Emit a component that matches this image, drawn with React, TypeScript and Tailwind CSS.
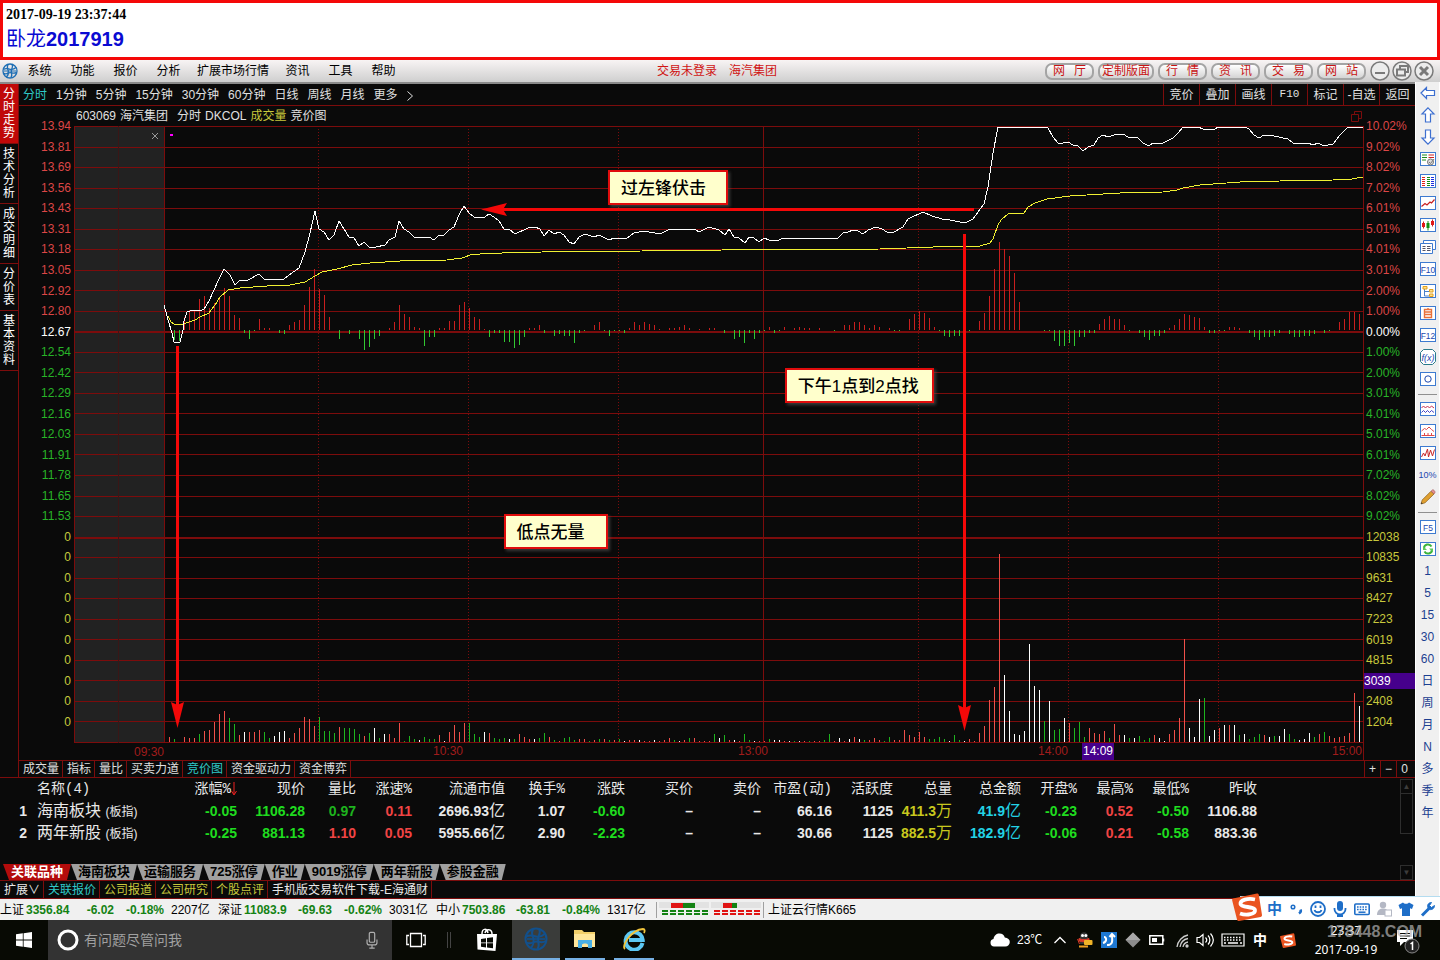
import React from 'react';
import clsx from 'clsx';

/* ---------- data ---------- */

const MENUS = ['系统', '功能', '报价', '分析', '扩展市场行情', '资讯', '工具', '帮助'];
const QUICK_LINKS = ['网厅', '定制版面', '行情', '资讯', '交易', '网站'];
const SIDE_TABS = ['分时走势', '技术分析', '成交明细', '分价表', '基本资料'];
const PERIODS = ['分时', '1分钟', '5分钟', '15分钟', '30分钟', '60分钟', '日线', '周线', '月线', '更多'];
const TOOLS = ['竞价', '叠加', '画线', 'F10', '标记', '-自选', '返回'];
const INDICATORS = ['成交量', '指标', '量比', '买卖力道', '竞价图', '资金驱动力', '资金博弈'];

const PRICES = [
    '13.94', '13.81', '13.69', '13.56', '13.43', '13.31', '13.18', '13.05', '12.92', '12.80',
    '12.67', '12.54', '12.42', '12.29', '12.16', '12.03', '11.91', '11.78', '11.65', '11.53',
];
const PERCENTS = [
    '10.02%', '9.02%', '8.02%', '7.02%', '6.01%', '5.01%', '4.01%', '3.01%', '2.00%', '1.00%',
    '0.00%', '1.00%', '2.00%', '3.01%', '4.01%', '5.01%', '6.01%', '7.02%', '8.02%', '9.02%',
];
const VOLUMES = ['12038', '10835', '9631', '8427', '7223', '6019', '4815', '3039', '2408', '1204'];

// one token per minute: colour + bar height
const VOLUME_BARS =
    'r5 g3 - r5 r4 r4 g8 r11 r12 r20 r28 r31 g24 g18 r7 w10 r10 r10 r12 g10 g4 w6 w10 w11 r4 r9 r14 r25 r23 r16 ' +
    'g25 g11 g11 g9 r15 g14 g14 g13 g8 r6 g9 w14 g4 w8 r8 r4 r19 g1 g6 g3 w2 g5 g3 g3 r7 w1 r10 r17 r10 r19 ' +
    'g19 g8 g5 w10 r9 g4 g3 g4 w3 g3 r8 r5 r3 w3 g4 g9 r5 g2 r1 g4 g5 g2 r3 r3 g1 r2 g3 r3 g2 r2 ' +
    'g3 w1 r2 r2 w2 r1 r1 w2 r1 r2 r4 g2 w1 r2 g4 r4 r1 r1 r1 g8 w4 g7 r2 w2 r1 g8 g2 w1 r1 r1 ' +
    'g3 w2 w2 r1 w1 g1 w1 r1 g1 r1 r1 g2 g8 r1 w4 r1 w3 r5 w3 g2 r2 r4 r2 g1 g5 r2 r2 r12 r7 r5 ' +
    'r10 r5 g3 g3 g5 g3 w1 g7 g2 w1 r3 r1 r9 r16 r42 r55 r188 w67 w31 w8 w7 w11 w98 w56 w52 g21 w41 g12 g13 w24 ' +
    'r19 g14 g20 g5 r14 r9 r8 r11 g4 r18 r7 w7 g4 w4 g6 g2 g4 r7 w4 w1 r8 r12 r24 r103 w14 w5 w43 g44 w6 w12 ' +
    'r14 w17 r17 w17 g7 w8 g3 g5 g8 r7 w5 g6 w6 w13 g8 g3 w2 w3 w9 g5 r8 g10 r6 r4 r5 r6 r9 r49 w36 g13';

// deviation from the zero line, starting at the second minute
const DELTAS = [
    -10, -11, 13, 20, 20, 31, 34, 22, 27, 32, 42, 34, 15, 12, -3, -9, -1, 11, 2, 2, 0, -3, -4, 5, 8, 10, 25, 43, 61, 41,
    35, 13, 0, -9, 0, -4, 0, -9, -20, -17, -9, -6, 0, 2, 8, 25, 16, 13, 3, 2, -16, -7, -7, 2, 2, 9, 9, 25, 28, 22,
    13, 11, 1, -7, -3, -3, -12, -12, -18, -15, -7, 2, 2, 5, -3, 0, -6, -4, -6, -6, -13, -3, -1, 0, 5, 8, -1, -6, -1, -1,
    -3, 2, 8, 5, 8, 6, 5, 1, 0, 2, 2, 3, 5, 2, 0, 1, 0, 2, 2, 0, -3, 0, -9, -7, -13, -3, -9, -3, -1, 3,
    -3, -1, 3, 0, 2, 3, 2, 2, 0, 2, 0, 0, -1, 0, 5, 5, 8, 8, 5, 2, 5, 3, 0, 2, -1, -1, 0, 11, 16, 19,
    17, 12, 3, -1, -6, -7, -6, -6, 0, -1, 0, 9, 17, 34, 61, 88, 81, 74, 57, 28, 0, 0, 0, 0, -1, -1, -11, -16, -16, -13,
    -16, -7, -7, -3, -3, 6, 11, 14, 11, 11, 5, -1, 0, -3, -7, -10, -6, -6, -3, 2, 5, 11, 16, 15, 13, 12, 3, -3, -3, -1,
    -1, 3, 3, 2, 0, -3, -7, -10, -7, -7, -6, -3, 0, -4, -7, -7, -6, -6, -4, 0, -3, -1, 0, 8, 11, 18, 18, 16, 11,
];

const PRICE_LINE =
    '164,305 166,312 168,320 172,333 174,342 180,342 183,330 184,321 187,312 190,311 195,310 200,311 204,309 209,301 218,281 ' +
    '224,269 230,275 235,285 239,281 248,280 259,274 264,279 284,279 289,275 299,268 305,252 310,233 315,211 319,229 324,232 ' +
    '329,240 334,235 339,221 349,237 354,238 359,246 364,242 369,247 376,247 385,245 389,240 395,237 399,221 404,229 409,232 ' +
    '414,237 423,238 429,237 434,240 439,235 444,235 449,230 454,227 459,215 464,206 469,213 474,217 485,217 489,214 494,217 ' +
    '499,221 504,229 509,229 515,234 528,228 535,227 540,229 544,236 549,230 554,234 559,232 564,235 569,242 574,244 579,237 ' +
    '585,234 594,237 599,235 609,240 614,238 627,238 634,233 644,231 660,234 670,229 695,229 699,232 709,227 719,230 725,235 ' +
    '729,229 734,237 739,238 745,243 749,237 754,238 759,242 764,238 769,240 779,240 783,238 838,238 843,233 848,232 853,230 ' +
    '858,231 863,234 868,230 876,227 882,229 887,232 894,232 903,227 908,219 923,212 932,216 942,219 950,220 960,222 967,222 ' +
    '973,219 978,212 984,204 988,187 993,153 998,127 1040,127 1048,128 1053,137 1058,143 1063,143 1068,142 1073,145 1078,146 ' +
    '1083,151 1088,147 1094,145 1098,138 1103,135 1108,137 1117,134 1123,134 1128,137 1138,138 1143,143 1149,146 1153,143 ' +
    '1163,143 1173,138 1178,133 1183,127 1198,127 1203,129 1214,130 1218,127 1245,127 1249,129 1254,135 1259,138 1264,135 ' +
    '1274,136 1288,139 1293,143 1308,143 1313,145 1318,143 1324,146 1333,144 1340,135 1348,127 1363,127';

const AVG_LINE =
    '168,316 171,322 174,324 183,324 195,320 200,317 209,313 215,305 220,297 228,290 240,288 267,286 290,285 305,282 315,276 ' +
    '322,272 337,269 352,265 370,263 400,261 447,260 462,258 473,254 480,254 502,253 542,252 642,251 722,250 880,249 960,246 ' +
    '980,246 990,243 993,239 998,225 1001,220 1008,214 1024,213 1028,207 1035,203 1047,199 1070,196 1120,193 1163,192 ' +
    '1177,190 1183,188 1200,185 1240,182 1280,181 1333,180 1352,179 1363,177';

const BAR_COLORS: Record<string, string> = { r: '#f0504a', g: '#1eb41e', w: '#ffffff' };

type Cell = [string, string?];

const COLUMNS = [
    '涨幅%', '现价', '量比', '涨速%', '流通市值', '换手%', '涨跌', '买价', '卖价',
    '市盈(动)', '活跃度', '总量', '总金额', '开盘%', '最高%', '最低%', '昨收',
];

const G = 'text-[#1fdc1f]';
const R = 'text-[#f04444]';
const Y = 'text-[#c8c81e]';
const C = 'text-[#22d3e6]';

const ROWS: { name: string; cells: Cell[] }[] = [
    {
        name: '海南板块',
        cells: [
            ['-0.05', G], ['1106.28', G], ['0.97', 'text-[#1eb41e]'], ['0.11', R], ['2696.93亿'], ['1.07'], ['-0.60', G], ['–'], ['–'],
            ['66.16'], ['1125'], ['411.3万', Y], ['41.9亿', C], ['-0.23', G], ['0.52', R], ['-0.50', G], ['1106.88'],
        ],
    },
    {
        name: '两年新股',
        cells: [
            ['-0.25', G], ['881.13', G], ['1.10', R], ['0.05', R], ['5955.66亿'], ['2.90'], ['-2.23', G], ['–'], ['–'],
            ['30.66'], ['1125'], ['882.5万', Y], ['182.9亿', C], ['-0.06', G], ['0.21', R], ['-0.58', G], ['883.36'],
        ],
    },
];

const SHEETS = ['关联品种', '海南板块', '运输服务', '725涨停', '作业', '9019涨停', '两年新股', '参股金融'];

const LINKS: [string, string][] = [
    ['扩展∨', 'text-[#e8e8e8]'],
    ['关联报价', 'text-[#2fc8c8]'],
    ['公司报道', 'text-[#c8c83c]'],
    ['公司研究', 'text-[#c8c83c]'],
    ['个股点评', 'text-[#c8c83c]'],
    ['手机版交易软件下载-E海通财', 'text-[#e8e8e8]'],
];

const INDEXES = [
    { name: '上证', value: '3356.84', diff: '-6.02', pct: '-0.18%', amount: '2207亿' },
    { name: '深证', value: '11083.9', diff: '-69.63', pct: '-0.62%', amount: '3031亿' },
    { name: '中小', value: '7503.86', diff: '-63.81', pct: '-0.84%', amount: '1317亿' },
];

/* ---------- small drawings ---------- */

const Logo = ({ className }: { className?: string }) => (
    <svg viewBox="0 0 24 24" className={className} fill="none" stroke="currentColor" strokeWidth="2">
        <circle cx="12" cy="12" r="10.5" />
        <path d="M2 9.500C7 7 9 9 12 9.500s6 0 9.500-3M2.500 15.500c4 2.500 7-1 9.500-1s6 2 10-.5" />
        <path d="M9 2C6.500 7 9 9 9.500 12s0 6-3 9.500M15 1.800c2.500 4-1 7-1 10s2 6.500-.5 10" />
        <path d="M3 12h18" strokeWidth="1.500" />
    </svg>
);

const Frame = ({ children }: { children?: React.ReactNode }) => (
    <svg viewBox="0 0 16 16" className="h-4 w-4">
        <rect x="0.5" y="1.500" width="15" height="13" fill="#fff" stroke="#3d7ad0" />
        {children}
    </svg>
);

const FrameText = ({ label }: { label: string }) => (
    <Frame>
        <text x="8" y="11.500" textAnchor="middle" fontSize="8.500" fill="#1c48b0" fontFamily="Liberation Sans, sans-serif">
            {label}
        </text>
    </Frame>
);

const Arrow = ({ d }: { d: string }) => (
    <svg viewBox="0 0 16 16" className="h-4 w-4">
        <path d={d} fill="#fff" stroke="#3d6fd0" strokeWidth="1.200" />
    </svg>
);

const SIDE_ICONS: { label: string; icon: React.ReactNode }[] = [
    { label: '后退', icon: <Arrow d="M1 8l5.500-5.500V5.500H14.500v5H6.500v3z" /> },
    { label: '向上', icon: <Arrow d="M8 .8L14 7H10.500v8h-5V7H2z" /> },
    { label: '向下', icon: <Arrow d="M8 15.200L14 9H10.500V1h-5v8H2z" /> },
    {
        label: '报价分析',
        icon: (
            <Frame>
                <path d="M2 4h5M2 6.500h5M2 9h4" stroke="#1c8a1c" />
                <path d="M8.500 4H14M8.500 6.500H14" stroke="#d02020" />
                <circle cx="10.500" cy="11" r="3" fill="#ddd" stroke="#777" />
                <path d="M9 11l1.500 1.500L14 8" stroke="#777" fill="none" />
            </Frame>
        ),
    },
    {
        label: '报价列表',
        icon: (
            <Frame>
                <g shapeRendering="crispEdges">
                    <path d="M2 4.500h3M2 6.500h3M2 8.500h3M2 10.500h3M2 12.500h3" stroke="#e02020" />
                    <path d="M7 4.500h3M7 6.500h3M7 8.500h3M7 10.500h3M7 12.500h3" stroke="#109010" />
                    <path d="M11 4.500h3M11 6.500h3M11 8.500h3M11 10.500h3M11 12.500h3" stroke="#1c2ee0" />
                </g>
            </Frame>
        ),
    },
    { label: '分时图', icon: <Frame><path d="M1.500 11.500L5 8.500l2 1.500 3-3 1.500 1L14.500 4.500" stroke="#c82020" strokeWidth="1.200" fill="none" /></Frame> },
    {
        label: 'K线图',
        icon: (
            <Frame>
                <path d="M3.500 4.500v7M12.500 2.500v7" stroke="#d02020" />
                <path d="M8 4v9.500" stroke="#1c8a1c" />
                <path d="M2 6h3v4H2zM11 4h3v4h-3z" fill="#e01818" />
                <path d="M6.500 6h3v5h-3z" fill="#109010" />
            </Frame>
        ),
    },
    {
        label: '多窗口',
        icon: (
            <svg viewBox="0 0 16 16" className="h-4 w-4">
                <path d="M3.500 1.500h12v9h-12z" fill="#fff" stroke="#3d7ad0" />
                <path d="M.5 4.500h12v10H.5z" fill="#fff" stroke="#3d7ad0" />
                <path d="M2.500 7.500h3M7 7.500h3.500M2.500 9.500h3M7 9.500h3.500M2.500 11.500h3M7 11.500h3.500" stroke="#556" />
            </svg>
        ),
    },
    { label: 'F10', icon: <FrameText label="F10" /> },
    {
        label: '板块树',
        icon: (
            <Frame>
                <path d="M4.500 6v7H9M4.500 8.500H9" stroke="#4a80c8" fill="none" />
                <path d="M3 3.500h4v2.500H3zM9.500 6.500H13V9H9.500zM9.500 11H13v2.500H9.500z" fill="#ffe08a" stroke="#e0a020" />
            </Frame>
        ),
    },
    {
        label: '自选股',
        icon: (
            <Frame>
                <path d="M4.500 4.500h7v8h-7zM4.500 7h7M4.500 9.500h7M8 3v1.500" stroke="#e8703a" strokeWidth="1.400" fill="none" />
            </Frame>
        ),
    },
    { label: 'F12', icon: <FrameText label="F12" /> },
    {
        label: '公式',
        icon: (
            <svg viewBox="0 0 16 16" className="h-4 w-4">
                <path d="M3.500.5h9l3 3v9l-3 3h-9l-3-3v-9z" fill="#fff" stroke="#2a7a8a" />
                <text x="8" y="11.500" textAnchor="middle" fontSize="9" fontStyle="italic" fill="#1c48b0" fontFamily="Liberation Sans, sans-serif">
                    f(x)
                </text>
            </svg>
        ),
    },
    { label: '圆', icon: <Frame><circle cx="8" cy="8" r="3.200" fill="none" stroke="#1c48b0" /></Frame> },
    { label: '-', icon: null },
    {
        label: '叠加曲线',
        icon: (
            <Frame>
                <path d="M1.500 7l2-2 2 2 2-2 2 2 2-2 2.500 2" stroke="#c83050" fill="none" />
                <path d="M1.500 11.500l2-2 2 2 2-2 2 2 2-2 2.500 2" stroke="#4040c8" fill="none" />
            </Frame>
        ),
    },
    {
        label: '区间统计',
        icon: <Frame><path d="M1.500 8l3-2.500 2 1L9 4l2.500 2.500L14 8.500M1.500 12.500h13M4.500 10v2.500M8 10v2.500M11.500 10v2.500" stroke="#e04848" fill="none" /></Frame>,
    },
    { label: '震荡', icon: <Frame><path d="M1.500 12l2-4 1.500 3 2.500-7 1 8 2-7 2 6 2-6.500" stroke="#c82828" fill="none" /></Frame> },
    { label: '10%', icon: <span className="text-[9px] text-[#1c48b0]">10%</span> },
    {
        label: '画笔',
        icon: (
            <svg viewBox="0 0 16 16" className="h-4 w-4">
                <path d="M1 15l1.200-4L11 2.200 14 5 5 13.800z" fill="#e0a030" stroke="#8a5a14" strokeWidth=".7" />
                <path d="M11 2.200L12.500.9c.8-.6 2.800 1.400 2.500 2.500L14 5z" fill="#e89090" stroke="#a06060" strokeWidth=".7" />
                <path d="M1 15l.5-1.800 1.300 1.200z" fill="#333" />
            </svg>
        ),
    },
    { label: '-', icon: null },
    { label: 'F5', icon: <FrameText label="F5" /> },
    {
        label: '刷新',
        icon: (
            <Frame>
                <path d="M11.500 5.500A4 4 0 004 7.500M4.500 10.500a4 4 0 007.500-2" stroke="#3cb43c" strokeWidth="2" fill="none" />
                <path d="M3 5v4h4zM13 11.500v-4H9z" fill="#5cc85c" />
            </Frame>
        ),
    },
    ...['1', '5', '15', '30', '60', '日', '周', '月', 'N', '多', '季', '年'].map((t) => ({
        label: t,
        icon: <span className="text-xs text-[#1c3f90]">{t}</span>,
    })),
];

const SogouS = ({ className }: { className?: string }) => (
    <svg viewBox="0 0 30 28" className={className}>
        <path d="M1 5.500L25 .5c1 0 1.500.3 1.800 1.300L30 22c0 1.200-.5 1.800-1.500 2L7 28c-1.200.1-1.800-.4-2-1.500L.2 7.500C0 6.500.2 5.800 1 5.500z" fill="#ea5420" />
        <path d="M23 6.500C16 5 8 7 8.500 11s14 2 14.500 6-8 6-15 3.500" fill="none" stroke="#fff" strokeWidth="3.800" />
    </svg>
);

/* ---------- sections ---------- */

const MenuBar = () => (
    <div className="flex h-6 items-center border-b-2 border-[#8a8a8a] bg-gradient-to-b from-[#f8f4f4] to-[#cfcfcf] text-xs text-black">
        <div className="flex flex-1 items-center">
            <Logo className="ml-[2px] h-4 w-4 text-[#1e6eb4]" />
            <nav className="flex">
                {MENUS.map((m) => (
                    <button key={m} className="min-w-[43px] px-[7px]">{m}</button>
                ))}
            </nav>
        </div>
        <div className="flex gap-3 text-[#d01414]">
            <span>交易未登录</span>
            <span>海汽集团</span>
        </div>
        <div className="flex flex-1 items-center justify-end gap-1 pr-[6px]">
            {QUICK_LINKS.map((q) => (
                <button
                    key={q}
                    className={clsx(
                        'flex h-[17px] items-center justify-between rounded-[7px] border-2 border-[#a4a4a4] bg-gradient-to-b from-white to-[#d4d4d4] leading-none text-[#c81414]',
                        q.length > 2 ? 'w-[56px] px-[2px]' : 'w-[49px] px-[6px]',
                    )}
                >
                    {q.length > 2 ? q : q.split('').map((ch) => <span key={ch}>{ch}</span>)}
                </button>
            ))}
            <div className="flex gap-[2px] text-[#7a7a7a]">
                {['M5 12h10', 'M8 8V5h8v6h-3M5 8.500h8v6H5z', 'M6 6l8 8M14 6l-8 8'].map((d, i) => (
                    <button key={d} aria-label={['最小化', '还原', '关闭'][i]}>
                        <svg viewBox="0 0 20 20" className="h-5 w-5" fill="none" stroke="currentColor">
                            <circle cx="10" cy="10" r="9" fill="#ececec" strokeWidth="1.500" />
                            <path d={d} strokeWidth={i === 2 ? 3 : 2} />
                        </svg>
                    </button>
                ))}
            </div>
        </div>
    </div>
);

const Note = ({ className, children }: { className: string; children: React.ReactNode }) => (
    <div className={clsx('absolute flex h-[35px] items-center whitespace-nowrap border-2 border-[#e00c0c] bg-[#ffffcc] pl-[11px] pt-[3px] text-[17px] font-medium text-black shadow-[2px_2px_3px_rgba(90,90,90,0.6)]', className)}>
        {children}
    </div>
);

const Chart = () => {
    const rows = Array.from({ length: 31 }, (_, i) => 126.5 + Math.round(i * 20.53));
    return (
        <div className="relative">
            <svg viewBox="74 126 1290 617" preserveAspectRatio="none" className="block h-[617px] w-full" fill="none">
                <rect x="75" y="126" width="89" height="616" fill="#222222" />
                <g stroke="#7c0c0c" shapeRendering="crispEdges">
                    {rows.map((y, i) => (
                        <line key={y} x1="75" x2="1363" y1={y} y2={y} strokeWidth={i === 10 || i === 20 ? 2 : 1} />
                    ))}
                    {[74.5, 164.5, 763.5, 1363.5].map((x) => (
                        <line key={x} x1={x} x2={x} y1="126" y2="743" />
                    ))}
                    <line x1="118.500" x2="118.500" y1="126" y2="743" stroke="#3a1616" />
                    {[318.5, 468.5, 618.5, 918.5, 1068.5, 1218.5].map((x) => (
                        <line key={x} x1={x} x2={x} y1="129" y2="742" strokeDasharray="1 2" />
                    ))}
                </g>
                <g shapeRendering="crispEdges">
                    {DELTAS.map((d, i) => {
                        if (!d) return null;
                        const x = 164 + (i + 2) * 5;
                        return <rect key={i} x={x} y={d > 0 ? 330 - d : 330} width="1" height={Math.abs(d)} fill={d > 0 ? '#c81e1e' : '#32c832'} />;
                    })}
                    {VOLUME_BARS.split(' ').map((t, i) => {
                        if (t === '-') return null;
                        const h = Number(t.slice(1));
                        return <rect key={i} x={164 + (i + 1) * 5} y={742 - h} width="1" height={h} fill={BAR_COLORS[t[0]]} />;
                    })}
                    <polyline points={AVG_LINE} stroke="#f0f032" />
                    <polyline points={PRICE_LINE} stroke="#ffffff" />
                </g>
                <path d="M152 133l6 6M158 133l-6 6" stroke="#999" />
                <rect x="170" y="134" width="3" height="2" fill="#f0f" />

                {/* hand-drawn arrows */}
                <g stroke="#f40808" strokeWidth="3">
                    <path d="M500 209.500H974" />
                    <path d="M177.500 346V708" />
                    <path d="M964.500 234V710" />
                </g>
                <g fill="#f40808">
                    <path d="M481 209.500l26-6.500-4 6.500 4 6.500z" />
                    <path d="M177.500 728l-6.500-26 6.500 3 6.500-3z" />
                    <path d="M964.500 731l-6.500-26 6.500 3 6.500-3z" />
                </g>
            </svg>
            <Note className="left-[41.4%] top-[44px] w-[120px]">过左锋伏击</Note>
            <Note className="left-[55.1%] top-[242px] w-[149px]">下午1点到2点找</Note>
            <Note className="left-[33.3%] top-[388px] w-[104px]">低点无量</Note>
        </div>
    );
};

const ChartPanel = () => (
    <section className="min-w-0 flex-1 text-xs">
        {/* period bar */}
        <div className="flex h-[22px] items-center border-b border-[#7c0c0c] text-[#e0e0e0]">
            <div className="flex flex-1 gap-[9px] pl-1">
                {PERIODS.map((p) => (
                    <button key={p} className={p === '分时' ? 'text-[#2fc8c8]' : ''}>{p}</button>
                ))}
                <svg viewBox="0 0 6 10" className="mt-1 h-[10px] w-[6px]" fill="none" stroke="currentColor"><path d="M.5.5L5.500 5 .5 9.500" /></svg>
            </div>
            {TOOLS.map((t) => (
                <button key={t} className={clsx('h-full w-9 whitespace-nowrap border-l border-[#7c0c0c]', t === 'F10' && "text-[11px] [font-family:'Liberation_Mono',monospace]")}>
                    {t}
                </button>
            ))}
        </div>

        <div className="flex">
            <div className="flex w-[55px] flex-col pb-[11px] pr-[3px] pt-[10px] text-right">
                {PRICES.map((p, i) => (
                    <span key={p} className={clsx('flex flex-1 items-center justify-end', i < 10 ? 'text-[#dc4646]' : i === 10 ? 'text-white' : 'text-[#28b428]')}>{p}</span>
                ))}
                {VOLUMES.map((v) => (
                    <span key={v} className="flex flex-1 items-center justify-end text-[#c8c83c]">0</span>
                ))}
            </div>

            <div className="min-w-0 flex-1">
                <div className="flex h-5 items-center pl-[2px] text-[#e0e0e0]">
                    <span>603069</span>
                    <span className="ml-1">海汽集团</span>
                    <span className="ml-[9px]">分时</span>
                    <span className="ml-1">DKCOL</span>
                    <span className="ml-1 text-[#c8c83c]">成交量</span>
                    <span className="ml-1 flex-1">竞价图</span>
                    <svg viewBox="0 0 11 11" className="mr-[2px] h-[11px] w-[11px]" fill="none" stroke="#7c0c0c"><path d="M3.500 3V.5h7v7H8M.5 3.500h7v7h-7z" /></svg>
                </div>
                <Chart />
            </div>

            <div className="flex w-[51px] flex-col pb-[11px] pt-[10px]">
                {PERCENTS.map((p, i) => (
                    <span key={i} className={clsx('flex flex-1 items-center pl-[2px]', i < 10 ? 'text-[#dc4646]' : i === 10 ? 'text-white' : 'text-[#28b428]')}>{p}</span>
                ))}
                {VOLUMES.map((v) => (
                    <span key={v} className="flex flex-1 items-center">
                        <span className={clsx('w-full leading-4', v === '3039' ? 'bg-[#46008c] text-white' : 'pl-[2px] text-[#c8c83c]')}>{v}</span>
                    </span>
                ))}
            </div>
        </div>

        {/* time axis */}
        <div className="flex h-[17px] items-center text-right text-[#a01c1c]">
            <span className="w-[145px]">09:30</span>
            <div className="flex flex-1 border-r border-[#7c0c0c] pr-[1px]">
                <span className="flex-[299]">10:30</span>
                <span className="flex-[305]">13:00</span>
                <span className="flex-[300]">14:00</span>
                <span className="flex flex-[294] justify-between">
                    <span className="ml-[14px] bg-[#46008c] px-[1px] leading-[17px] text-white">14:09</span>
                    <span className="leading-[17px]">15:00</span>
                </span>
            </div>
            <span className="w-[51px]" />
        </div>

        {/* indicator tabs */}
        <div className="flex h-[18px] items-center border-y border-[#7c0c0c] pr-[3px] text-[#e0e0e0]">
            {INDICATORS.map((t) => (
                <button key={t} className={clsx('h-4 whitespace-nowrap border-r border-[#7c0c0c] pl-1 pr-[3px] leading-4', t === '竞价图' && 'text-[#2fc8c8]')}>{t}</button>
            ))}
            <span className="flex-1" />
            {['+', '−', '0'].map((t) => (
                <button key={t} className="h-4 w-4 border-l border-[#7c0c0c] leading-4">{t}</button>
            ))}
        </div>
    </section>
);

const QuoteTable = () => (
    <div className="flex text-[#e8e8e8]">
        <div className="min-w-0 flex-1">
            <div className="h-[86px] overflow-hidden">
                <table className="w-full table-fixed text-right text-sm font-bold leading-none">
                    <colgroup>
                        <col className="w-[27px]" />
                        <col className="w-[150px]" />
                        <col className="w-[60px]" />
                        <col className="w-[68px]" />
                        <col className="w-[51px]" />
                        <col className="w-[56px]" />
                        <col className="w-[93px]" />
                        <col className="w-[60px]" />
                        <col className="w-[60px]" />
                        <col className="w-[68px]" />
                        <col className="w-[68px]" />
                        <col className="w-[71px]" />
                        <col className="w-[61px]" />
                        <col className="w-[59px]" />
                        <col className="w-[69px]" />
                        <col className="w-[56px]" />
                        <col className="w-[56px]" />
                        <col className="w-[56px]" />
                        <col className="w-[68px]" />
                        <col />
                    </colgroup>
                    <thead>
                        <tr className="h-[22px] whitespace-nowrap font-normal [font-family:'Liberation_Mono','Noto_Sans_CJK_SC',monospace]">
                            <th />
                            <th className="pl-[10px] text-left font-normal">名称(4)</th>
                            {COLUMNS.map((c, i) => (
                                <th key={c} className="font-normal">
                                    {c}
                                    {i === 0 && (
                                        <svg viewBox="0 0 6 14" className="inline h-[14px] w-[6px]" fill="none" stroke="#f02020"><path d="M3 0v12M.5 9L3 13l2.500-4" /></svg>
                                    )}
                                </th>
                            ))}
                            <th />
                        </tr>
                    </thead>
                    <tbody>
                        {ROWS.map((r, i) => (
                            <tr key={r.name} className="h-[22px] whitespace-nowrap">
                                <td>{i + 1}</td>
                                <td className="pl-[10px] text-left text-base font-normal leading-none">
                                    {r.name} <span className="text-xs">(板指)</span>
                                </td>
                                {r.cells.map(([text, color], j) => (
                                    <td key={j} className={color}>
                                        {text.replace(/[亿万]/, '')}
                                        {/[亿万]/.test(text) && <span className="text-base font-normal leading-none">{text.slice(-1)}</span>}
                                    </td>
                                ))}
                                <td />
                            </tr>
                        ))}
                    </tbody>
                </table>
            </div>
            {/* sheet tabs */}
            <div className="flex h-4 pl-[3px] text-[13px] font-bold leading-4">
                {SHEETS.map((s, i) => (
                    <button
                        key={s}
                        className={clsx(
                            'whitespace-nowrap [clip-path:polygon(0_0,100%_0,calc(100%-4px)_100%,6px_100%)]',
                            i === 0 ? 'bg-[#b40c0c] px-2 text-white' : 'bg-[#a0a0a0] px-[7px] text-black',
                        )}
                    >
                        {s}
                    </button>
                ))}
            </div>
        </div>
        {/* scroll bar */}
        <div className="mr-[2px] flex w-[13px] flex-col pt-[1px] text-[#3c3c3c]">
            <button aria-label="上" className="flex h-[15px] items-center justify-center border border-[#2e2e2e] text-[8px] leading-none">▲</button>
            <div className="h-10 border border-t-0 border-[#2e2e2e]" />
            <span className="flex-1" />
            <button aria-label="下" className="flex h-[15px] items-center justify-center border border-[#2e2e2e] text-[8px] leading-none">▼</button>
        </div>
    </div>
);

const LinkRow = () => (
    <div className="flex h-[19px] border-y border-[#7c0c0c] text-xs leading-[15px]">
        {LINKS.map(([t, color]) => (
            <a key={t} href="#" className={clsx('whitespace-nowrap border-r border-[#7c0c0c] pl-1 pr-[3px] pt-[2px]', color)}>{t}</a>
        ))}
    </div>
);

const IndexMeter = ({ red, green, base }: { red: number; green: number; base: string }) => (
    <svg viewBox="0 0 50 16" className="h-4 w-[50px]" shapeRendering="crispEdges">
        <rect width="50" height="6" fill="#e2e2e2" />
        <rect x="12" width={red} height="5" y="1" fill="#e01414" />
        <rect x={12 + red} width={green} height="5" y="1" fill="#148214" />
        {[9, 12].map((y) => (
            <path key={y} d={`M3 ${y}h47`} stroke={base} strokeWidth="2" strokeDasharray="6 2" />
        ))}
    </svg>
);

const StatusBar = () => (
    <footer className="flex h-[21px] items-center whitespace-nowrap bg-[#f0f0f0] text-xs text-black">
        {INDEXES.map((x) => (
            <div key={x.name} className="flex w-[218px]">
                <span className="w-[26px]">{x.name}</span>
                <b className="w-[46px] text-[#148214]">{x.value}</b>
                <b className="w-[42px] text-right text-[#148214]">{x.diff}</b>
                <b className="w-[50px] text-right text-[#148214]">{x.pct}</b>
                <span className="ml-[7px]">{x.amount}</span>
            </div>
        ))}
        <div className="ml-[2px] flex gap-[2px] border-x border-[#a0a0a0] px-[2px]">
            <IndexMeter red={12} green={12} base="#148214" />
            <IndexMeter red={9} green={5} base="#e01414" />
        </div>
        <span className="pl-1">上证云行情K665</span>
    </footer>
);

const ImeBar = () => (
    <div className="absolute bottom-10 right-0 flex h-6 w-[200px] items-center justify-between border-t border-[#b4dcf0] bg-white pl-[27px] pr-1 text-[#1e6ec8]">
        <SogouS className="absolute -left-[8px] -top-[4px] h-[28px] w-[30px]" />
        <b className="text-[15px] leading-none">中</b>
        <svg viewBox="0 0 16 16" className="h-4 w-4" fill="none" stroke="currentColor">
            <circle cx="5" cy="6" r="1.800" strokeWidth="1.500" />
            <path d="M12.500 8.500c.8 1.500 0 3-1.500 4" strokeWidth="2.500" />
        </svg>
        <svg viewBox="0 0 16 16" className="h-4 w-4" fill="none" stroke="currentColor" strokeWidth="1.800">
            <circle cx="8" cy="8" r="7" />
            <path d="M5.500 4.500v2.500M10.500 4.500v2.500M4.500 9c1 3 6 3 7 0" />
        </svg>
        <svg viewBox="0 0 16 16" className="h-4 w-4" fill="currentColor">
            <rect x="5" y="0" width="6" height="10" rx="3" />
            <path d="M2.500 7v1a5.500 5.500 0 0011 0V7M8 13v2.500M5 15h6" fill="none" stroke="currentColor" strokeWidth="1.800" />
        </svg>
        <svg viewBox="0 0 16 16" className="h-4 w-4" fill="none" stroke="currentColor">
            <rect x=".8" y="3" width="14.400" height="10.500" rx="1" strokeWidth="1.600" />
            <path d="M3 6h10M3 8.500h10" strokeWidth="1.500" strokeDasharray="1.600 1.100" />
            <path d="M4.500 11.200h7" strokeWidth="1.500" />
        </svg>
        <svg viewBox="0 0 16 16" className="h-4 w-4" fill="#b4b8c4">
            <circle cx="7" cy="4" r="3.200" />
            <path d="M1 14c0-5 3-6.500 6-6.500s6 1.500 6 6.500z" />
            <rect x="9" y="9" width="6.500" height="6" fill="#fff" stroke="#b4b8c4" />
        </svg>
        <svg viewBox="0 0 16 16" className="h-4 w-4" fill="currentColor">
            <path d="M5 1.500c1 1.800 5 1.800 6 0l4.500 2.500-1.500 4-2-.8V15H4V7.200L2 8 .5 4z" />
        </svg>
        <svg viewBox="0 0 16 16" className="h-4 w-4" fill="none" stroke="currentColor">
            <path d="M2 14.500L9 7.500" strokeWidth="3" />
            <path d="M14.500 4.500L11.500 6.500 9.500 4.500 11.500 1.500C8 1.500 6.500 5 8.500 7.500s6 .5 6-3z" fill="currentColor" />
        </svg>
    </div>
);

const Taskbar = () => (
    <div className="flex h-10 items-stretch bg-[#080a04] text-white">
        <button aria-label="开始" className="flex w-12 items-center justify-center">
            <svg viewBox="0 0 16 16" className="h-4 w-4" fill="#fff"><path d="M0 2.200L6.800 1.300v6.300H0zM7.600 1.200L16 0v7.600H7.600zM0 8.400h6.800v6.300L0 13.800zM7.600 8.400H16V16l-8.400-1.200z" /></svg>
        </button>
        <label className="flex w-[344px] items-center bg-[#333333] pl-[9px] pr-3">
            <svg viewBox="0 0 22 22" className="h-[22px] w-[22px]" fill="none" stroke="#fff"><circle cx="11" cy="11" r="9" strokeWidth="3" /></svg>
            <input aria-label="搜索" placeholder="有问题尽管问我" className="ml-[5px] min-w-0 flex-1 bg-transparent text-sm outline-none placeholder:text-[#a0a0a0]" />
            <svg viewBox="0 0 16 20" className="h-[18px] w-4" fill="none" stroke="#b0b0b0" strokeWidth="1.300">
                <rect x="5" y="1.500" width="6" height="11" rx="1.500" />
                <path d="M2.500 9.500v3.500c0 2 1 2.500 2.500 2.500h6c1.500 0 2.500-.5 2.500-2.500V9.500M8 15.500V19M5 19h6" />
            </svg>
        </label>
        <button aria-label="任务视图" className="flex w-12 items-center justify-center">
            <svg viewBox="0 0 20 16" className="h-4 w-5" fill="none" stroke="#fff" strokeWidth="1.300"><path d="M4.500 1.500h11v13h-11zM3 3.500H.8v9H3M17 3.500h2.200v9H17" /></svg>
        </button>
        <div className="flex w-[18px] items-center justify-center gap-[2px]">
            <span className="h-4 w-px bg-[#444]" />
            <span className="h-4 w-px bg-[#444]" />
        </div>
        <button aria-label="应用商店" className="ml-1 flex w-[50px] items-center justify-center">
            <svg viewBox="0 0 22 24" className="h-6 w-[22px]">
                <path d="M1 6h20l-1.500 17-18-1.500z" fill="#fff" />
                <path d="M6 6c0-6 5-6 6-1M9 5c1-5 7-4 7 1" fill="none" stroke="#fff" strokeWidth="1.500" />
                <path d="M5 11l5-.8v4.300H5zM11 10l6-.8v5.300h-6zM5 15.300h5v4.200l-5-.7zM11 15.300h6v5l-6-.8z" fill="#080a04" />
            </svg>
        </button>
        <button aria-label="海通证券" className="flex w-12 items-center justify-center border-b-2 border-[#76b0e4] bg-[#3a3c3a]">
            <Logo className="h-6 w-6 text-[#12508c]" />
        </button>
        <button aria-label="文件夹" className="ml-[5px] flex w-10 items-center justify-center border-b-2 border-[#76b0e4]">
            <svg viewBox="0 0 22 20" className="h-5 w-[22px]">
                <path d="M0 1h8l2 2h11v15H0z" fill="#f2cf6a" />
                <path d="M0 5h21v13H0z" fill="#ffe69a" />
                <path d="M4 19v-8h14v8h-4v-3c0-2-6-2-6 0v3z" fill="#4ab0e6" />
            </svg>
        </button>
        <button aria-label="浏览器" className="ml-[9px] flex w-10 items-center justify-center border-b-2 border-[#76b0e4]">
            <svg viewBox="0 0 24 24" className="h-6 w-6" fill="none">
                <path d="M20.500 16A8.500 8.500 0 113.800 12.500 8.500 8.500 0 0120.700 13H7" stroke="#5cc8f4" strokeWidth="4" />
                <path d="M3 22C-1 19 9 3 21 2c2 0 2 2 1 4" stroke="#f0c43c" strokeWidth="1.800" />
            </svg>
        </button>

        <span className="flex-1" />

        <div className="flex items-center">
            <svg viewBox="0 0 20 14" className="h-[14px] w-5" fill="#fff"><path d="M4 13.500a3.800 3.800 0 01-.5-7.500C4 2.500 6.500.5 9.500.5c2.800 0 4.500 1.500 5.300 4 3 .2 5 2 5 4.500 0 2.700-2 4.500-4.500 4.500z" /></svg>
            <span className="ml-[7px] w-[26px] whitespace-nowrap text-xs">23℃</span>
            <svg viewBox="0 0 12 8" className="ml-[11px] h-2 w-3" fill="none" stroke="#fff" strokeWidth="1.300"><path d="M.5 7L6 1.500 11.500 7" /></svg>
            <svg viewBox="0 0 16 16" className="ml-[11px] h-4 w-4">
                <path d="M3 4c0-5 8-5 8 0v8H3z" fill="#333" />
                <circle cx="5.500" cy="3.500" r="1.500" fill="#fff" /><circle cx="8.800" cy="3.500" r="1.500" fill="#fff" />
                <path d="M2 6.500c3 1.500 7 1.500 10 0v2.500c-3 1-7 1-10 0zM.5 7l2 5" fill="#d83a28" stroke="#d83a28" />
                <rect x="7" y="8" width="8.500" height="5" rx="1" fill="#f0b428" />
                <path d="M2 14.500h9" stroke="#f0a020" strokeWidth="2" />
            </svg>
            <svg viewBox="0 0 16 16" className="ml-2 h-4 w-4">
                <rect width="16" height="16" fill="#1e78d2" />
                <path d="M2 11c4-1 4-6 1-6M6 13c7 0 5-6 5-9M8.500 5L11 2l3 3" fill="none" stroke="#fff" strokeWidth="2" />
            </svg>
            <svg viewBox="0 0 16 16" className="ml-2 h-4 w-4"><path d="M8 .5L15.500 8 8 15.500.5 8z" fill="#8c8c8c" /><path d="M8 .5L15.500 8H.5z" fill="#a8a8a8" /></svg>
            <svg viewBox="0 0 16 10" className="ml-2 h-[10px] w-4"><path d="M.8.8h13v8.400H.8zM14.500 3.500v3" fill="none" stroke="#fff" strokeWidth="1.500" /><path d="M3 3h5v4H3z" fill="#fff" /></svg>
            <svg viewBox="0 0 16 16" className="ml-[9px] h-4 w-4" fill="none" stroke="#ccc" strokeWidth="1.300">
                <path d="M3 15A14 14 0 0114 3M6 15A10 10 0 0114 6.500M9 15a6 6 0 015-5" /><circle cx="13" cy="14" r="1" fill="#fff" />
            </svg>
            <svg viewBox="0 0 18 16" className="ml-[6px] h-4 w-[18px]" fill="none" stroke="#fff" strokeWidth="1.200">
                <path d="M1 5.500h2.500L7 2.500v11L3.500 10.500H1zM9.500 5.500c1.500 1.500 1.500 3.500 0 5M12 3.500c2.500 2.500 2.500 6.500 0 9M14.500 1.500c3.500 4 3.500 9 0 13" />
            </svg>
            <svg viewBox="0 0 24 14" className="ml-[7px] h-[14px] w-6" fill="none" stroke="#fff">
                <path d="M1 1h22v12H1z" strokeWidth="1.200" />
                <path d="M3 4.500h18M3 7h18" strokeDasharray="1.500 1.500" strokeWidth="1.500" />
                <path d="M3 10h2M7 10h10M19 10h2" strokeWidth="1.500" />
            </svg>
            <b className="ml-2 text-sm">中</b>
            <SogouS className="ml-[13px] h-[15px] w-4" />
            <div className="relative ml-4 flex items-center">
                <div className="w-[68px] text-center text-xs leading-[19px] [font-family:'Noto_Sans',sans-serif]">
                    <div>23:37</div>
                    <div>2017-09-19</div>
                </div>
                <svg viewBox="0 0 24 28" className="ml-4 mr-5 h-7 w-6">
                    <path d="M1 4h16v12H8l-4 4v-4H1z" fill="#fff" />
                    <path d="M4 7.500h10M4 10h10M4 12.500h7" stroke="#080a04" />
                    <circle cx="16" cy="20" r="7" fill="#222" stroke="#888" />
                    <path d="M14.500 18l2-1.500V24" stroke="#fff" strokeWidth="1.500" fill="none" />
                </svg>
                <span className="absolute left-[15px] top-[3px] text-base font-bold leading-none text-[#b4b4b4]/70">
                    178448.COM
                </span>
            </div>
        </div>
    </div>
);

export default function App() {
    return (
        <div className="relative bg-[#0a0a0a] [font-family:'Liberation_Sans','Noto_Sans_CJK_SC',sans-serif]">
            <header className="h-[60px] border-[3px] border-[#f40808] bg-white pl-[3px] pt-[2px]">
                <p className="text-sm font-bold leading-5 text-black [font-family:'Liberation_Serif',serif]">2017-09-19 23:37:44</p>
                <h1 className="pt-[2px] text-xl leading-6 text-[#0a0ad2]">
                    卧龙<b>2017919</b>
                </h1>
            </header>
            <MenuBar />
            <div className="flex">
                <main className="min-w-0 flex-1">
                    <div className="flex">
                        <div className="flex w-[19px] flex-col border-r border-[#7c0c0c] text-xs">
                            {SIDE_TABS.map((t, i) => (
                                <button
                                    key={t}
                                    className={clsx('flex flex-col items-center border-b border-[#7c0c0c] pb-[3px] pt-1 leading-[13px] text-white', i === 0 && 'bg-[#c00808]')}
                                >
                                    {t.split('').map((ch) => <span key={ch}>{ch}</span>)}
                                </button>
                            ))}
                            <span className="flex-1 border-b border-[#7c0c0c]" />
                        </div>
                        <ChartPanel />
                    </div>
                    <QuoteTable />
                    <LinkRow />
                </main>
                <aside className="-mt-[2px] flex w-[25px] flex-col border-x border-white bg-[#f0f0f0]">
                    {SIDE_ICONS.map((s, i) =>
                        s.icon ? (
                            <button key={i} aria-label={s.label} className="flex h-[22px] items-center justify-center leading-none">{s.icon}</button>
                        ) : (
                            <div key={i} className="flex h-2 items-center px-[2px]"><hr className="w-full border-[#909090]" /></div>
                        ),
                    )}
                </aside>
            </div>
            <StatusBar />
            <Taskbar />
            <ImeBar />
        </div>
    );
}
